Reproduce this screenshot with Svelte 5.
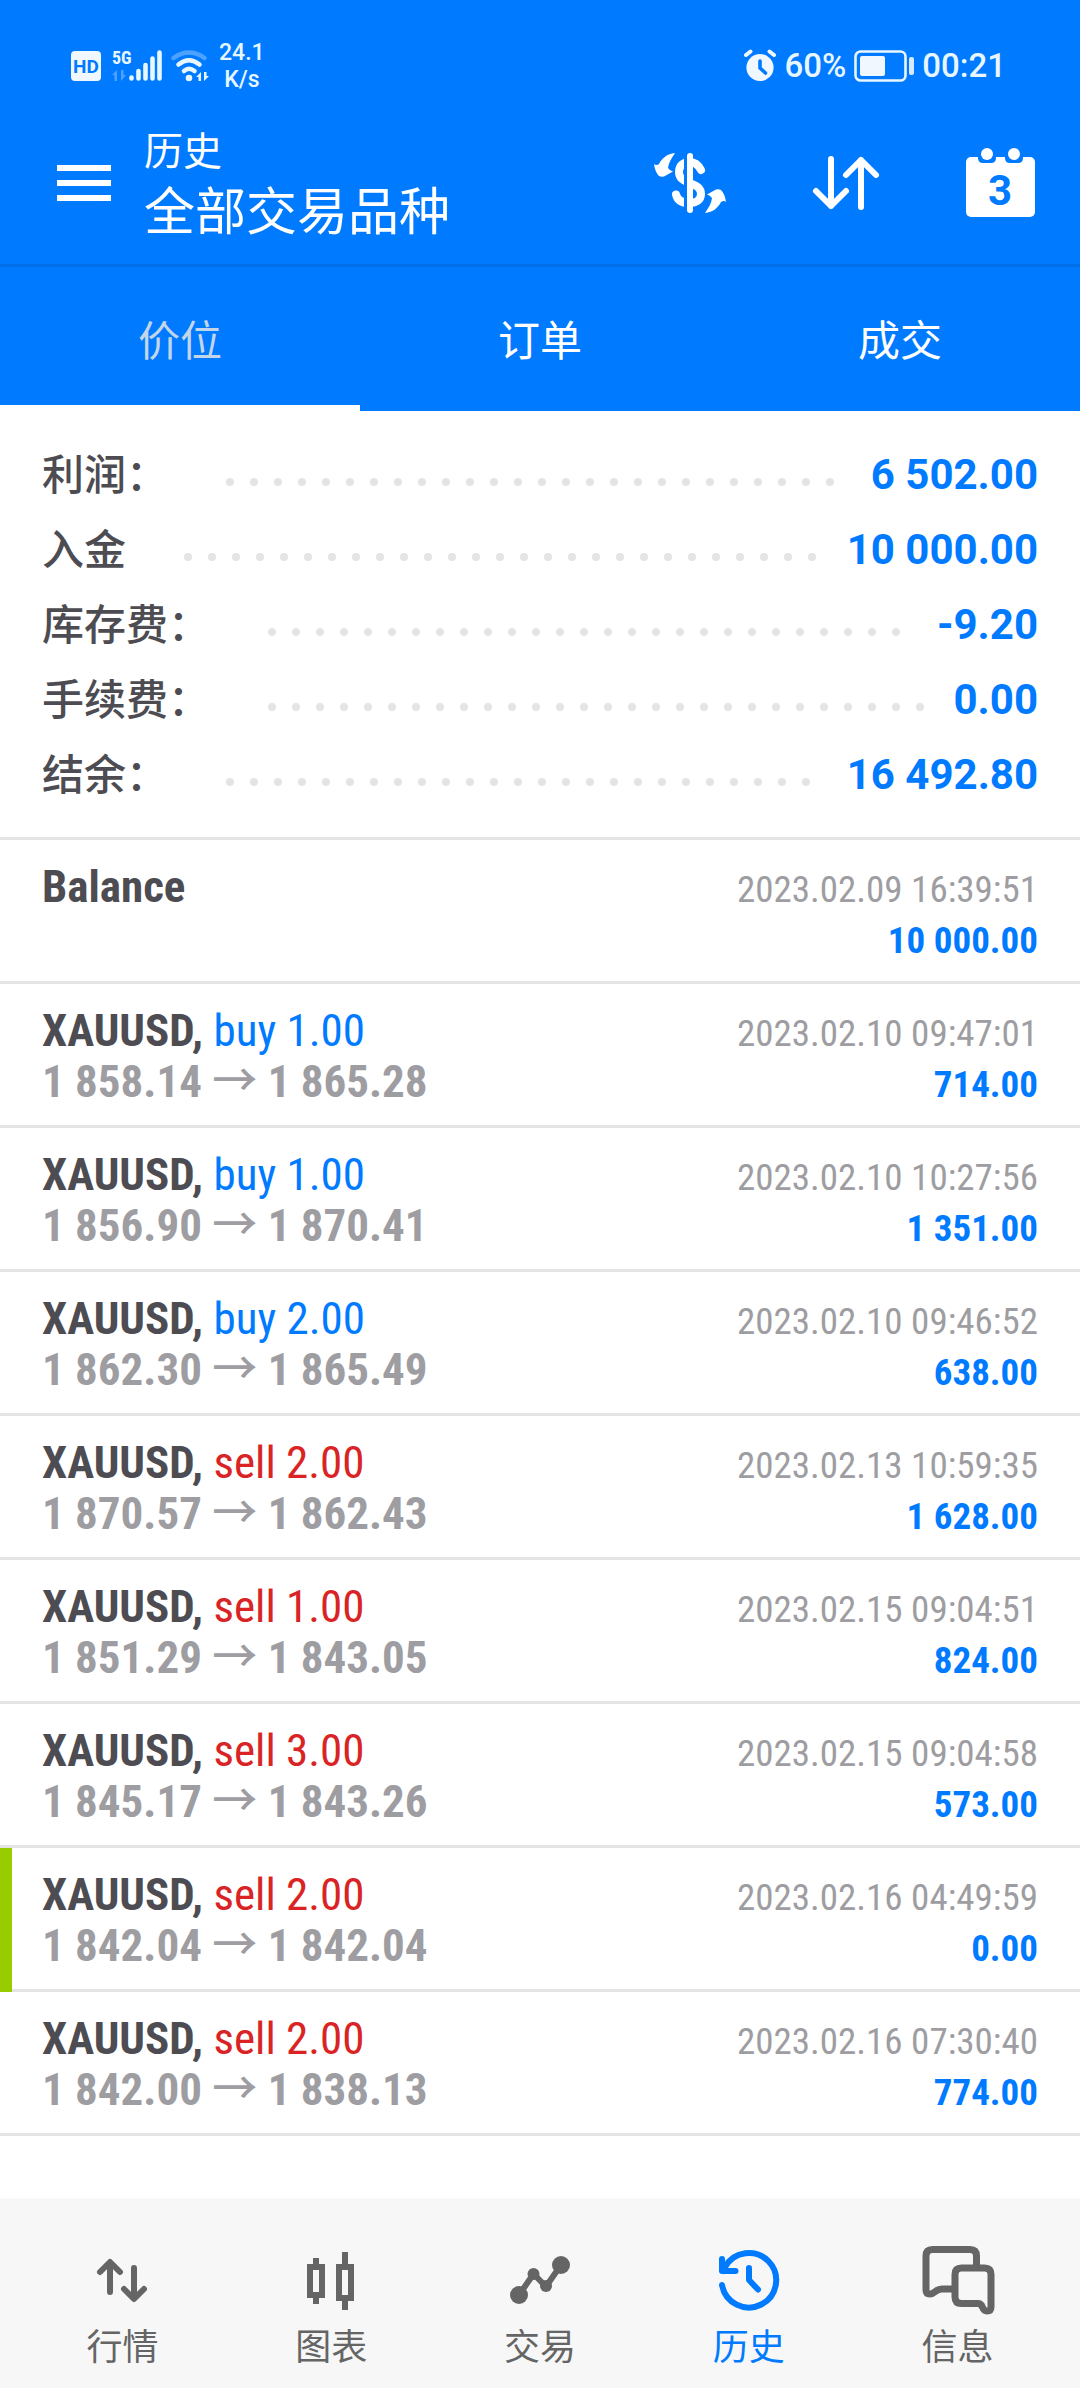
<script>
    let tab = $state("价位");
    let page = $state("历史");

    const tabs = ["价位", "订单", "成交"];

    const summary = [
        { label: "利润：", value: "6 502.00" },
        { label: "入金", value: "10 000.00" },
        { label: "库存费：", value: "-9.20" },
        { label: "手续费：", value: "0.00" },
        { label: "结余：", value: "16 492.80" },
    ];

    const deals = [
        { type: "balance", time: "2023.02.09 16:39:51", profit: "10 000.00" },
        { type: "buy", lots: "1.00", open: "1 858.14", close: "1 865.28", time: "2023.02.10 09:47:01", profit: "714.00" },
        { type: "buy", lots: "1.00", open: "1 856.90", close: "1 870.41", time: "2023.02.10 10:27:56", profit: "1 351.00" },
        { type: "buy", lots: "2.00", open: "1 862.30", close: "1 865.49", time: "2023.02.10 09:46:52", profit: "638.00" },
        { type: "sell", lots: "2.00", open: "1 870.57", close: "1 862.43", time: "2023.02.13 10:59:35", profit: "1 628.00" },
        { type: "sell", lots: "1.00", open: "1 851.29", close: "1 843.05", time: "2023.02.15 09:04:51", profit: "824.00" },
        { type: "sell", lots: "3.00", open: "1 845.17", close: "1 843.26", time: "2023.02.15 09:04:58", profit: "573.00" },
        { type: "sell", lots: "2.00", open: "1 842.04", close: "1 842.04", time: "2023.02.16 04:49:59", profit: "0.00", marked: true },
        { type: "sell", lots: "2.00", open: "1 842.00", close: "1 838.13", time: "2023.02.16 07:30:40", profit: "774.00" },
    ];

    const pages = ["行情", "图表", "交易", "历史", "信息"];
    // more dots than fit, the ones that wrap are hidden
    const dots = Array(60);
</script>

<div class="app">
    <div class="top">
        <div class="status">
            <div class="group">
                <svg class="network" width="138" height="32" viewBox="0 0 138 32" aria-hidden="true">
                    <rect x="0" y="1" width="30" height="30" rx="4" fill="#f0f7ff" />
                    <text x="15" y="23" text-anchor="middle" font-size="19" font-weight="700" fill="#007aff">HD</text>
                    <text x="41" y="14" font-size="18" font-weight="700" class="narrow" fill="#e8f7ff">5G</text>
                    <g fill="#4da2ff">
                        <path d="M41 25 46 20V31H43.500V25Z" />
                        <path d="M55 25 50 31V20H52.500V25Z" />
                    </g>
                    <g stroke="#e8f7ff" stroke-width="4.600" stroke-linecap="round">
                        <path d="M60.500 27.500V28.500M67.500 21V28.500M74.500 15V28.500M81.500 8.500V28.500M88.500 2.500V28.500" />
                    </g>
                    <g fill="none" stroke="#e8f7ff" stroke-width="4.500" stroke-linecap="round">
                        <path d="M102.500 8Q118 -3 133.500 8" stroke="#4da2ff" />
                        <path d="M107.500 14.500Q118 6 128.500 14.500" />
                        <path d="M113 21Q118 16.500 123.500 21" />
                    </g>
                    <circle cx="118" cy="28" r="3.300" fill="#e8f7ff" />
                    <path d="M125 27 130 22V31H127.500V27ZM138 26 133 31V22H135.500V26Z" fill="#e8f7ff" />
                </svg>
                <span class="speed">24.1<br />K/s</span>
            </div>
            <div class="group right">
                <svg width="32" height="32" viewBox="0 0 32 32" aria-hidden="true">
                    <circle cx="16" cy="17.500" r="13.600" fill="#f0f7ff" />
                    <path d="M2 5 6.500 1.500M30 5 25.500 1.500" stroke="#f0f7ff" stroke-width="4" stroke-linecap="round" />
                    <path d="M16 11V18L21.500 23" fill="none" stroke="#007aff" stroke-width="3.600" stroke-linecap="round" />
                </svg>
                <span>60%</span>
                <svg width="60" height="32" viewBox="0 0 60 32" aria-hidden="true">
                    <rect x="1.500" y="1.500" width="50" height="29" rx="5" fill="none" stroke="#e8f7ff" stroke-width="2.600" />
                    <rect x="6" y="6" width="25" height="20" rx="2" fill="#f0f7ff" />
                    <rect x="55" y="7" width="5" height="18" rx="2" fill="#d5eaff" />
                </svg>
                <span>00:21</span>
            </div>
        </div>

        <header>
            <button class="menu" aria-label="menu">
                <svg width="54" height="36" viewBox="0 0 54 36">
                    <path d="M0 3H54M0 18H54M0 33H54" stroke="#fff" stroke-width="6" />
                </svg>
            </button>
            <div class="title">
                <small>历史</small>
                <h1>全部交易品种</h1>
            </div>
            <div class="actions">
                <button aria-label="currency">
                    <svg width="72" height="60" viewBox="0 0 72 60">
                        <path d="M47 17C44 11 40 9 35.500 9C29 9 25 13 25 19C25 25 29 27.500 35.500 30C43 32.500 47 35 47 41C47 47 42 50 35.500 50C29 50 23.500 48 22 41.500" fill="none" stroke="#fff" stroke-width="8" stroke-linecap="round" />
                        <path d="M30 0H36V60H30Z" fill="#007aff" />
                        <path d="M36 3V57" stroke="#fff" stroke-width="6" stroke-linecap="round" />
                        <path id="swap" d="M21 0C13 1 8 5 5 11Q2 13 0 11Q1 19 5 23Q7 24 10 23.500L19 18.500Q16 18 14 15C14.500 10 17 6 21 0Z" fill="#fff" />
                        <use href="#swap" transform="rotate(180 36 30)" />
                    </svg>
                </button>
                <button aria-label="sort">
                    <svg width="66" height="56" viewBox="0 0 66 56">
                        <path d="M18 4V51M3 36 18 51 33 36M48 52V5M33 20 48 5 63 20" fill="none" stroke="#fff" stroke-width="6" stroke-linecap="round" stroke-linejoin="round" />
                    </svg>
                </button>
                <button aria-label="date">
                    <svg width="69" height="70" viewBox="0 0 69 70">
                        <rect y="9" width="69" height="60" rx="5" fill="#fff" />
                        <path d="M12 8V10Q12 15 17 15H25Q30 15 30 10V8ZM39 8V10Q39 15 44 15H52Q57 15 57 10V8Z" fill="#007aff" />
                        <circle cx="21" cy="6" r="6" fill="#fff" />
                        <circle cx="48" cy="6" r="6" fill="#fff" />
                        <text x="34" y="57" text-anchor="middle" font-size="42" font-weight="700" fill="#007aff">3</text>
                    </svg>
                </button>
            </div>
        </header>

        <div class="tabs" role="tablist">
            {#each tabs as name}
                <button role="tab" aria-selected={tab == name} class:active={tab == name} onclick={() => (tab = name)}>{name}</button>
            {/each}
        </div>
    </div>

    <main>
        <dl class="summary">
            {#each summary as item}
                <div class="total">
                    <dt>{item.label}</dt>
                    <span class="leader" aria-hidden="true">
                        {#each dots as _}<i></i>{/each}
                    </span>
                    <dd>{item.value}</dd>
                </div>
            {/each}
        </dl>

        <ul class="deals">
            {#each deals as deal}
                <li class:marked={deal.marked}>
                    <div class="line">
                        {#if deal.type == "balance"}
                            <strong>Balance</strong>
                        {:else}
                            <span><strong>XAUUSD,</strong> <span class={deal.type}>{deal.type} {deal.lots}</span></span>
                        {/if}
                        <time>{deal.time}</time>
                    </div>
                    <div class="line">
                        <span class="price">
                            {#if deal.open}{deal.open} <span class="arrow">→</span> {deal.close}{:else}&nbsp;{/if}
                        </span>
                        <span class="profit">{deal.profit}</span>
                    </div>
                </li>
            {/each}
        </ul>
    </main>

    <nav>
        {#each pages as name, i}
            <a href="#{i}" class:current={page == name} onclick={() => (page = name)}>
                <svg width="72" height="72" viewBox="0 0 72 72" fill="none" stroke="currentColor" stroke-width="6" aria-hidden="true">
                    {#if i == 0}
                        <path d="M24 48V19M14 28 24 18 34 28M48 24V53M38 45 48 55 58 45" stroke-linecap="round" stroke-linejoin="round" />
                    {:else if i == 1}
                        <path d="M15 23H27V51H15ZM21 14V20M21 54V60M44 23H56V54H44ZM50 8V20M50 57V66" />
                    {:else if i == 2}
                        <path d="M15 51 29.500 30 42 42.500 57 21" />
                        <g fill="currentColor" stroke="none">
                            <circle cx="15" cy="51" r="9" />
                            <circle cx="29.500" cy="30" r="6" />
                            <circle cx="42" cy="42" r="6" />
                            <circle cx="57" cy="21" r="9" />
                        </g>
                    {:else if i == 3}
                        <path d="M9 41A27.300 27.300 0 1 0 12 23L10 27M9 15V27H22.500M36 24V36L45 45.500" stroke-linecap="round" stroke-linejoin="round" />
                    {:else}
                        <path d="M54.500 21V12Q54.500 5.500 48 5.500H10.500Q4 5.500 4 12V46Q4 50 8 50C13 50 13 45 20 45H30" stroke-width="7" />
                        <path d="M33 53V30.500Q33 24 39.500 24H62.500Q69 24 69 30.500V63Q69 67 65 67C59 67 62 59.500 56 59.500H39.500Q33 59.500 33 53Z" stroke-width="7" />
                    {/if}
                </svg>
                <span>{name}</span>
            </a>
        {/each}
    </nav>
</div>

<style>
:global(body) {
    margin: 0;
    background-color: #fff;
}
.app {
    display: flex;
    flex-direction: column;
    min-height: 100vh;
    font-family: Roboto, "Noto Sans CJK SC", sans-serif;
    color: #4d4c52;
}
button {
    padding: 0;
    border: 0;
    background: none;
    color: inherit;
    font: inherit;
    cursor: pointer;
}
svg {
    display: block;
    flex: none;
    overflow: visible;
}

.top {
    background-color: #007aff;
    color: white;
}
.status {
    box-sizing: border-box;
    height: 120px;
    padding: 12px 74px 0 71px;
    display: flex;
    align-items: center;
    justify-content: space-between;
    color: #e8f7ff;
}
.group {
    display: flex;
    align-items: center;
    gap: 10px;
}
.right {
    gap: 8px;
    font-size: 33px;
    font-weight: 500;
    line-height: 40px;
}
.speed {
    font-size: 23px;
    font-weight: 500;
    line-height: 27px;
    text-align: center;
}
.narrow {
    font-family: "Roboto Condensed", Roboto, sans-serif;
}

header {
    display: flex;
    align-items: center;
    padding: 3px 45px 21px 57px;
    border-bottom: 3px solid #006fe8;
}
.title {
    margin-left: 33px;
    flex: 1;
    font-family: "Noto Sans CJK SC", sans-serif;
}
.title small {
    display: block;
    font-size: 39px;
    line-height: 50px;
}
h1 {
    margin: 0;
    font-size: 51px;
    font-weight: 400;
    line-height: 70px;
}
.actions {
    display: flex;
    align-items: center;
    gap: 87px;
}

.tabs {
    display: flex;
    font-family: "Noto Sans CJK SC", sans-serif;
}
.tabs button {
    flex: 1;
    height: 144px;
    padding-top: 2px;
    border-bottom: 6px solid transparent;
    font-size: 42px;
}
.tabs .active {
    border-bottom-color: white;
    color: #c3d5e8;
}

.summary {
    margin: 0;
    padding: 26px 42px 25px;
    border-bottom: 3px solid #e4e4e5;
}
.total {
    display: flex;
    align-items: center;
    height: 75px;
    font-size: 42px;
}
dt {
    padding-bottom: 6px;
    font-family: "Noto Sans CJK SC", sans-serif;
    font-weight: 500;
    white-space: nowrap;
}
.leader {
    flex: 1;
    display: flex;
    flex-wrap: wrap;
    height: 8px;
    margin: 15px 20px 0 50px;
    overflow: hidden;
}
.leader i {
    width: 8px;
    height: 8px;
    margin: 0 8px;
    border-radius: 50%;
    background-color: #e4e4e4;
}
dd {
    margin: 0;
    color: #007aff;
    font-weight: 700;
}

.deals {
    margin: 0;
    padding: 0;
    list-style: none;
    font-family: "Roboto Condensed", Roboto, sans-serif;
}
li {
    position: relative;
    padding: 21px 42px 18px;
    border-bottom: 3px solid #e4e4e5;
}
.marked::before {
    content: "";
    position: absolute;
    top: 0;
    bottom: -3px;
    left: 0;
    width: 12px;
    background-color: #99cc00;
}
.line {
    display: flex;
    align-items: baseline;
    justify-content: space-between;
    height: 51px;
    font-size: 45px;
    line-height: 51px;
    white-space: nowrap;
}
.buy {
    color: #007aff;
}
.sell {
    color: #d92324;
}
.price {
    color: #9d9da2;
    font-weight: 700;
}
.arrow {
    font-family: "Noto Sans CJK SC", sans-serif;
    font-weight: 500;
    line-height: 0;
}
time {
    color: #9d9da2;
    font-size: 37px;
}
.profit {
    color: #007aff;
    font-size: 37px;
    font-weight: 700;
}

nav {
    display: flex;
    margin-top: auto;
    padding: 45px 18px 15px;
    background-color: #f7f7f7;
    box-shadow: 0 0 4px #f7f7f7;
}
nav a {
    flex: 1;
    display: flex;
    flex-direction: column;
    align-items: center;
    color: #656565;
    font-family: "Noto Sans CJK SC", sans-serif;
    font-size: 36px;
    line-height: 57px;
    text-decoration: none;
}
nav .current {
    color: #007aff;
}
</style>
